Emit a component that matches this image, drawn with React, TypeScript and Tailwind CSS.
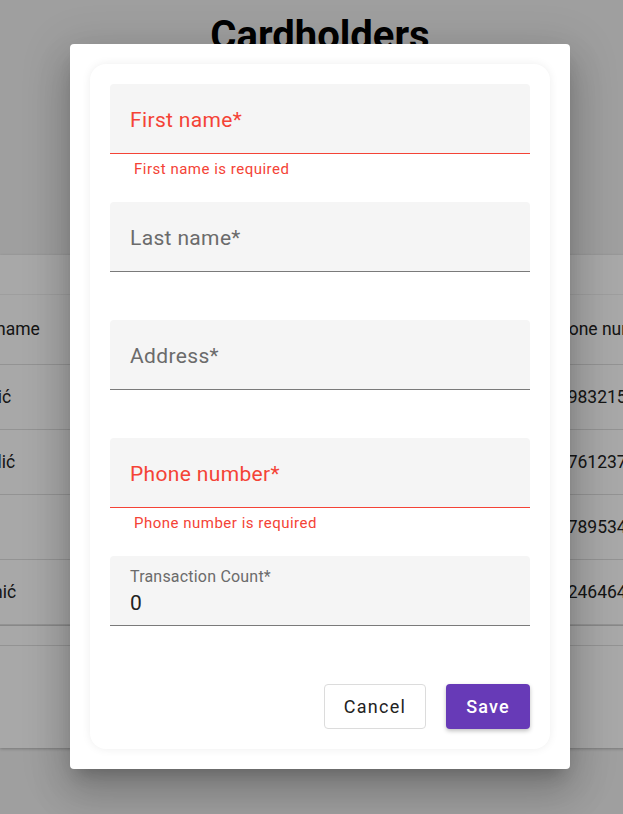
import React from "react";

const ROBOTO = "font-['Roboto',sans-serif]";

const rows = [
  { last: "Nikolić", first: "Marko", address: "Bulevar oslobođenja 12", phone: "0698321548" },
  { last: "Vukolić", first: "Jelena", address: "Kneza Miloša 7", phone: "0676123790" },
  { last: "Lukić", first: "Stefan", address: "Njegoševa 21", phone: "0678953412" },
  { last: "Marinić", first: "Ana", address: "Cara Dušana 44", phone: "0624646401" },
];

function Cell({ children, w }: { children?: React.ReactNode; w: string }) {
  return <div className={`${w} shrink-0 truncate px-4`}>{children}</div>;
}

function Field({ label, error, value }: { label: string; error?: string; value?: string }) {
  const line = error ? "border-[#f44336]" : "border-[#7a7a7a]";
  return (
    <div>
      <div className={`flex h-[70px] flex-col justify-center rounded-t-[4px] border-b bg-[#f5f5f5] px-5 ${line}`}>
        {value === undefined ? (
          <span className={`pt-[4px] text-[21px] leading-none tracking-[0.35px] ${error ? "text-[#f44336]" : "text-[#6b6b6b]"}`}>
            {label}
          </span>
        ) : (
          <div>
            <div className="text-[16px] leading-[20px] tracking-[0.2px] text-[#6b6b6b]">{label}</div>
            <div className="mt-[4px] text-[21px] leading-[24px] text-[#222]">{value}</div>
          </div>
        )}
      </div>
      <div className="h-[48px] pl-6 pt-[5px] text-[15px] leading-[20px] tracking-[0.5px] text-[#f44336]">{error}</div>
    </div>
  );
}

export default function App() {
  return (
    <div className={`relative h-[814px] w-full overflow-hidden bg-[#f2f2f2] ${ROBOTO}`}>
      <div className="w-[640px]">
        <h1 className="pt-[12px] text-center text-[40px] font-bold leading-[48px] text-black">Cardholders</h1>

        <div className="mt-[195px] overflow-hidden bg-white text-[17.5px] text-[#222] shadow-[0_1px_3px_rgba(0,0,0,0.25)]">
          <div className="h-[40px] border-b border-[#f0f0f0]" />
          <div className="-ml-[58px] flex h-[70px] items-center border-b border-[#e0e0e0]">
            <Cell w="w-[200px]">Last name</Cell>
            <Cell w="w-[198px]">First name</Cell>
            <Cell w="w-[192px]">Address</Cell>
            <Cell w="w-[200px]">Phone number</Cell>
          </div>
          {rows.map((r) => (
            <div key={r.phone} className="-ml-[58px] flex h-[65px] items-center border-b border-[#e0e0e0]">
              <Cell w="w-[200px]">{r.last}</Cell>
              <Cell w="w-[198px]">{r.first}</Cell>
              <Cell w="w-[192px]">{r.address}</Cell>
              <Cell w="w-[200px]">{r.phone}</Cell>
            </div>
          ))}
          <div className="h-[21px] border-t border-[#cfcfcf] border-b border-b-[#e0e0e0]" />
          <div className="h-[102px]" />
        </div>
      </div>

      <div className="absolute inset-0 bg-black/[0.34]">
        <div className="flex w-[640px] justify-center pt-[44px]">
          <div className="w-[500px] rounded-[4px] bg-white p-5 shadow-[0_11px_15px_-7px_rgba(0,0,0,0.2),0_24px_38px_3px_rgba(0,0,0,0.14),0_9px_46px_8px_rgba(0,0,0,0.12)]">
            <div className="rounded-[16px] bg-white p-5 shadow-[0_0_10px_rgba(0,0,0,0.07)]">
              <Field label="First name*" error="First name is required" />
              <Field label="Last name*" />
              <Field label="Address*" />
              <Field label="Phone number*" error="Phone number is required" />
              <Field label="Transaction Count*" value="0" />
              <div className="mt-[10px] flex justify-end gap-5">
                <button className="h-[45px] w-[102px] rounded-[4px] border border-[#dcdcdc] bg-white text-[18px] tracking-[1.3px] text-[#222]">
                  Cancel
                </button>
                <button className="h-[45px] w-[84px] rounded-[4px] bg-[#673ab7] text-[18px] font-medium tracking-[1.1px] text-white shadow-[0_2px_4px_rgba(0,0,0,0.25)]">
                  Save
                </button>
              </div>
            </div>
          </div>
        </div>
      </div>
    </div>
  );
}
